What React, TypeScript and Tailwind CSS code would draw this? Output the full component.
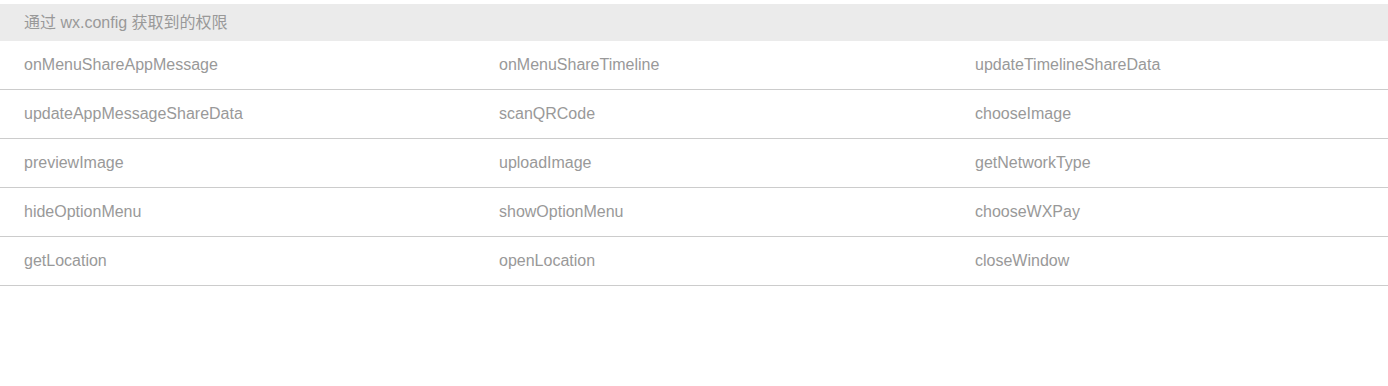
const apis = [
  "onMenuShareAppMessage",
  "onMenuShareTimeline",
  "updateTimelineShareData",
  "updateAppMessageShareData",
  "scanQRCode",
  "chooseImage",
  "previewImage",
  "uploadImage",
  "getNetworkType",
  "hideOptionMenu",
  "showOptionMenu",
  "chooseWXPay",
  "getLocation",
  "openLocation",
  "closeWindow",
];

export default function App() {
  const rows: string[][] = [];
  for (let i = 0; i < apis.length; i += 3) rows.push(apis.slice(i, i + 3));

  return (
    <div
      className="w-[1388px] h-[386px] bg-white pt-1 text-[#999999]"
      style={{ fontFamily: '"Liberation Sans", Arial, "Noto Sans CJK SC", sans-serif' }}
    >
      {/* header */}
      <div className="h-[37px] bg-[#ebebeb] pl-6 flex items-center text-base text-[#999999]">
        通过 wx.config 获取到的权限
      </div>

      {/* api list */}
      {rows.map((row, i) => (
        <div
          key={i}
          className="grid grid-cols-[475px_476px_1fr] h-[49px] border-b border-[#cccccc] items-center text-base"
        >
          {row.map((name) => (
            <div key={name} className="pl-6 -mt-px">
              {name}
            </div>
          ))}
        </div>
      ))}
    </div>
  );
}
